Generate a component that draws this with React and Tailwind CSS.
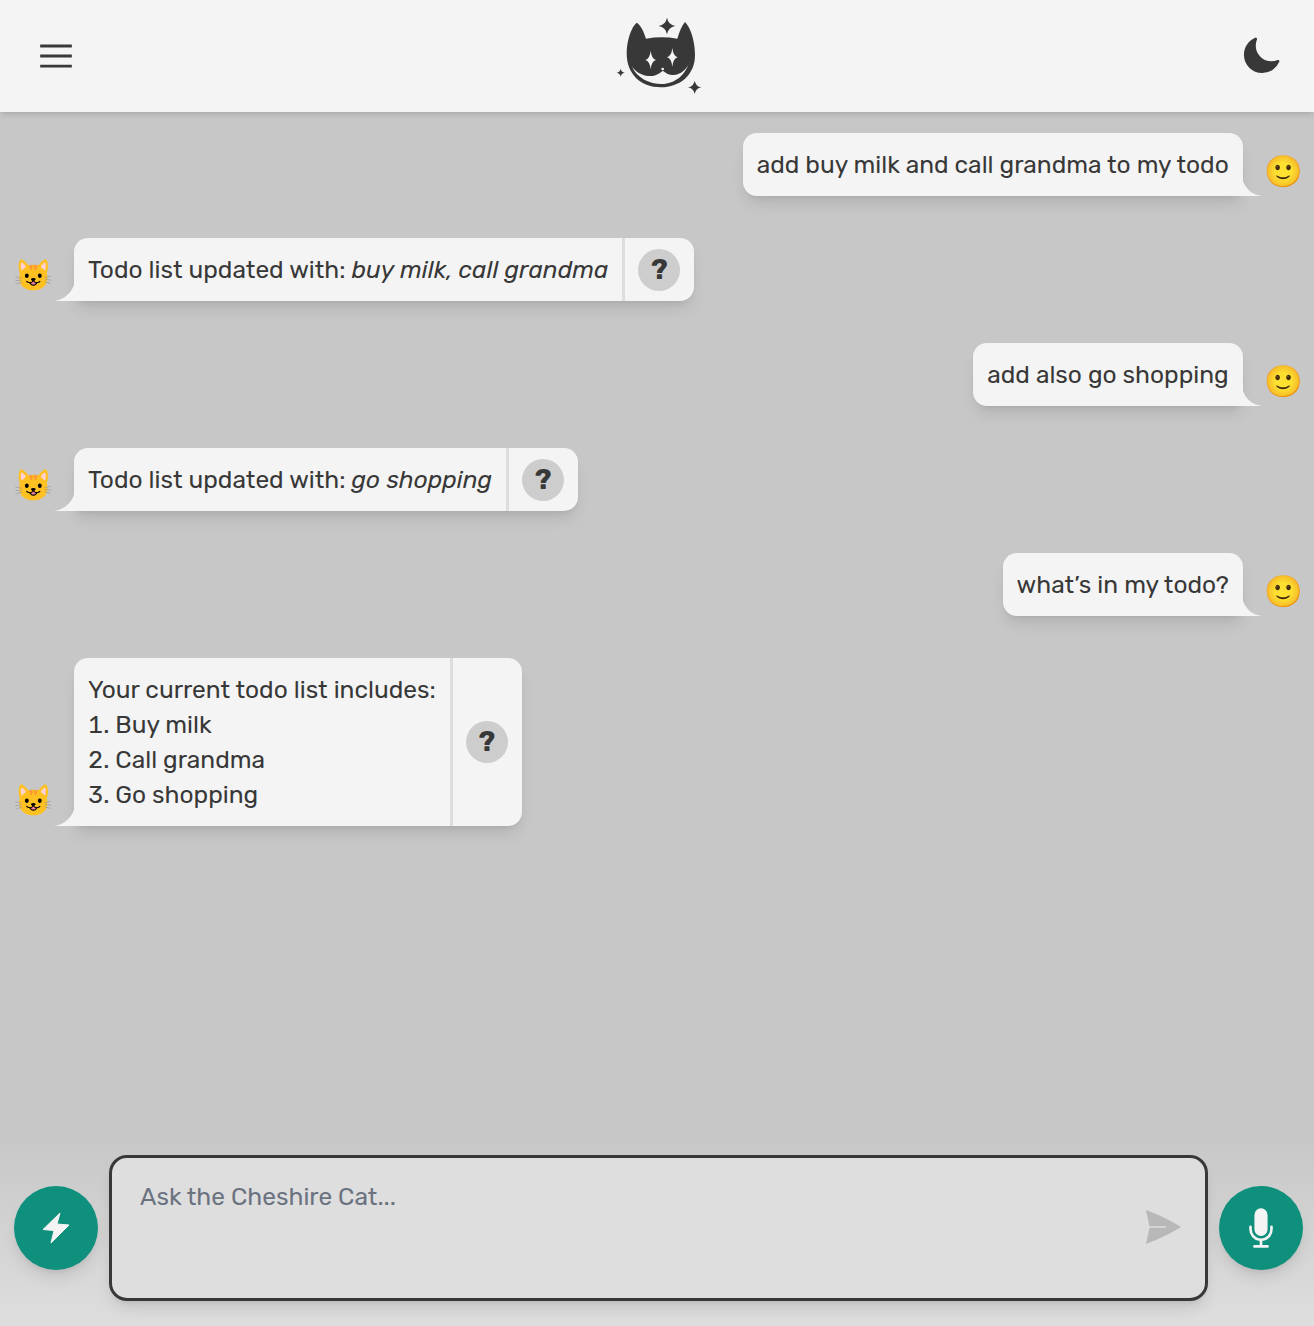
import React from 'react'

const messages = [
	{ who: 'user', text: 'add buy milk and call grandma to my todo' },
	{ who: 'cat', text: 'Todo list updated with: ', em: 'buy milk, call grandma' },
	{ who: 'user', text: 'add also go shopping' },
	{ who: 'cat', text: 'Todo list updated with: ', em: 'go shopping' },
	{ who: 'user', text: 'what’s in my todo?' },
	{
		who: 'cat',
		text: 'Your current todo list includes:',
		items: ['Buy milk', 'Call grandma', 'Go shopping'],
	},
]

// four pointed sparkle used around the logo and in its eyes
function sparkle(cx, cy, rx, ry) {
	const kx = rx * 0.15
	const ky = ry * 0.15
	return `M${cx} ${cy - ry}Q${cx + kx} ${cy - ky} ${cx + rx} ${cy}Q${cx + kx} ${cy + ky} ${cx} ${cy + ry}Q${cx - kx} ${cy + ky} ${cx - rx} ${cy}Q${cx - kx} ${cy - ky} ${cx} ${cy - ry}Z`
}

function Logo() {
	return (
		<svg viewBox="0 0 360 336" className="w-[120px] h-[112px] shrink-0">
			<path
				fill="#383838"
				d="M110 68C122 75 132 95 138 116Q185 108 232 116C238 95 245 78 255 66C270 80 285 120 285 165C285 225 240 262 182 262C125 262 80 225 80 160C80 120 95 80 110 68Z"
			/>
			<path
				fill="#F4F4F4"
				d="M95 197C110 235 150 252 185 252C225 252 258 225 270 180C265 205 240 228 215 225C205 224 195 217 188 212C180 220 165 230 145 228C125 226 105 215 95 197Z"
			/>
			<circle cx="188" cy="207" r="4" fill="#F4F4F4" />
			<path fill="#F4F4F4" d={sparkle(152, 180, 16, 28)} />
			<path fill="#F4F4F4" d={sparkle(217, 172, 16, 28)} />
			<path fill="#383838" d={sparkle(201, 78, 25, 25)} />
			<path fill="#383838" d={sparkle(62, 218, 12, 12)} />
			<path fill="#383838" d={sparkle(284, 262, 20, 20)} />
		</svg>
	)
}

function Tail({ side }) {
	if (side === 'left') {
		return (
			<svg viewBox="0 0 21 20" className="absolute bottom-0 -left-[20px] w-[21px] h-5">
				<path fill="#F4F4F4" d="M21 0V20H0C10 19 19 11 21 0Z" />
			</svg>
		)
	}
	return (
		<svg viewBox="0 0 20 19" className="absolute bottom-0 -right-[19px] w-5 h-[19px]">
			<path fill="#F4F4F4" d="M0 0V19H20C10 18 2 11 0 0Z" />
		</svg>
	)
}

function Message({ who, text, em, items }) {
	if (who === 'user') {
		return (
			<div className="flex justify-end items-end">
				<div className="relative bg-[#f4f4f4] rounded-[14px] rounded-br-none p-3.5 shadow-[0_10px_15px_-3px_rgba(0,0,0,0.1),0_4px_6px_-4px_rgba(0,0,0,0.1)]">
					{text}
					<Tail side="right" />
				</div>
				<span className="w-[71.3px] pl-[11px] h-[40px] mb-[4px] text-center text-[31px] leading-[40px] shrink-0">
					🙂
				</span>
			</div>
		)
	}
	return (
		<div className="flex items-end">
			<span className="w-[74px] pr-[8px] h-[40px] mb-[5px] text-center text-[31px] leading-[40px] shrink-0">
				😺
			</span>
			<div className="relative flex bg-[#f4f4f4] rounded-[14px] rounded-bl-none shadow-[0_10px_15px_-3px_rgba(0,0,0,0.1),0_4px_6px_-4px_rgba(0,0,0,0.1)]">
				<div className="p-3.5">
					{text}
					{em && <em>{em}</em>}
					{items && (
						<ol className="list-decimal list-inside">
							{items.map(item => <li key={item}>{item}</li>)}
						</ol>
					)}
				</div>
				<div className="flex items-center border-l-[3px] border-[#dedede] pl-[13px] pr-3.5">
					<button className="w-[42px] h-[42px] rounded-full bg-[#cdcdcd] flex items-center justify-center font-bold text-[28px] leading-none text-[#383838]">
						?
					</button>
				</div>
				<Tail side="left" />
			</div>
		</div>
	)
}

export default function App() {
	return (
		<div className="h-screen flex flex-col bg-[#c7c7c7] text-[#383838] text-[24.5px] leading-[35px] font-['Rubik','Inter',sans-serif] overflow-hidden">
			<header className="h-[112px] shrink-0 bg-[#f4f4f4] flex items-center justify-between pl-[33px] pr-[32px] shadow-md">
				<svg viewBox="0 0 24 24" fill="none" stroke="#383838" strokeWidth="1.5" className="w-[46px] h-[46px] shrink-0">
					<path d="M3.75 6.75h16.5M3.75 12h16.5m-16.5 5.25h16.5" />
				</svg>
				<Logo />
				<svg viewBox="0 0 24 24" fill="#383838" className="w-[42px] h-[42px] shrink-0">
					<path d="M9.528 1.718a.75.75 0 0 1 .162.819A8.97 8.97 0 0 0 9 6a9 9 0 0 0 9 9 8.97 8.97 0 0 0 3.463-.69.75.75 0 0 1 .981.98 10.503 10.503 0 0 1-9.694 6.46c-5.799 0-10.5-4.701-10.5-10.5 0-4.368 2.667-8.112 6.46-9.694a.75.75 0 0 1 .818.162Z" />
				</svg>
			</header>

			<main className="flex-1 flex flex-col gap-[42px] pt-[21px] min-h-0">
				{messages.map((m, i) => (
					<Message key={i} {...m} />
				))}
			</main>

			<footer className="shrink-0 flex items-center justify-between px-[11px] pb-[25px] pt-[21px] bg-gradient-to-b from-[#c7c7c7] to-[#dedede]">
				<button className="w-[84px] h-[84px] ml-[3px] rounded-full bg-[#0f907d] flex items-center justify-center shadow-lg shrink-0">
					<svg viewBox="0 0 28 32" className="w-7 h-8">
						<path fill="#F4F4F4" stroke="#F4F4F4" strokeWidth="1" strokeLinejoin="round" d="M18 1L1 17.5L12 18.5L9 31L27 13L15 12Z" />
					</svg>
				</button>
				<div className="relative flex-1 mx-[11px] h-[146px] rounded-[18px] border-[3px] border-[#383838] bg-[#dedede] shadow-lg">
					<textarea
						readOnly
						placeholder="Ask the Cheshire Cat..."
						className="w-full h-full resize-none bg-transparent outline-none pl-7 pr-20 pt-[21px] placeholder:text-[#6b7280]"
					/>
					<svg viewBox="0 0 36 36" className="absolute right-6 top-[51px] w-9 h-9">
						<path fill="#b8b8b8" d="M1 1Q20 8 36 18Q20 28 1 35L4.5 18.7H21V17.3H4.5Z" />
					</svg>
				</div>
				<button className="w-[84px] h-[84px] rounded-full bg-[#0f907d] flex items-center justify-center shadow-lg shrink-0">
					<svg viewBox="0 0 24 24" fill="#F4F4F4" className="w-[42px] h-[42px]">
						<path d="M8.25 4.5a3.75 3.75 0 1 1 7.5 0v8.25a3.75 3.75 0 1 1-7.5 0V4.5Z" />
						<path d="M6 10.5a.75.75 0 0 1 .75.75v1.5a5.25 5.25 0 1 0 10.5 0v-1.5a.75.75 0 0 1 1.5 0v1.5a6.751 6.751 0 0 1-6 6.709v2.291h3a.75.75 0 0 1 0 1.5h-7.5a.75.75 0 0 1 0-1.5h3v-2.291a6.751 6.751 0 0 1-6-6.709v-1.5A.75.75 0 0 1 6 10.5Z" />
					</svg>
				</button>
			</footer>
		</div>
	)
}
